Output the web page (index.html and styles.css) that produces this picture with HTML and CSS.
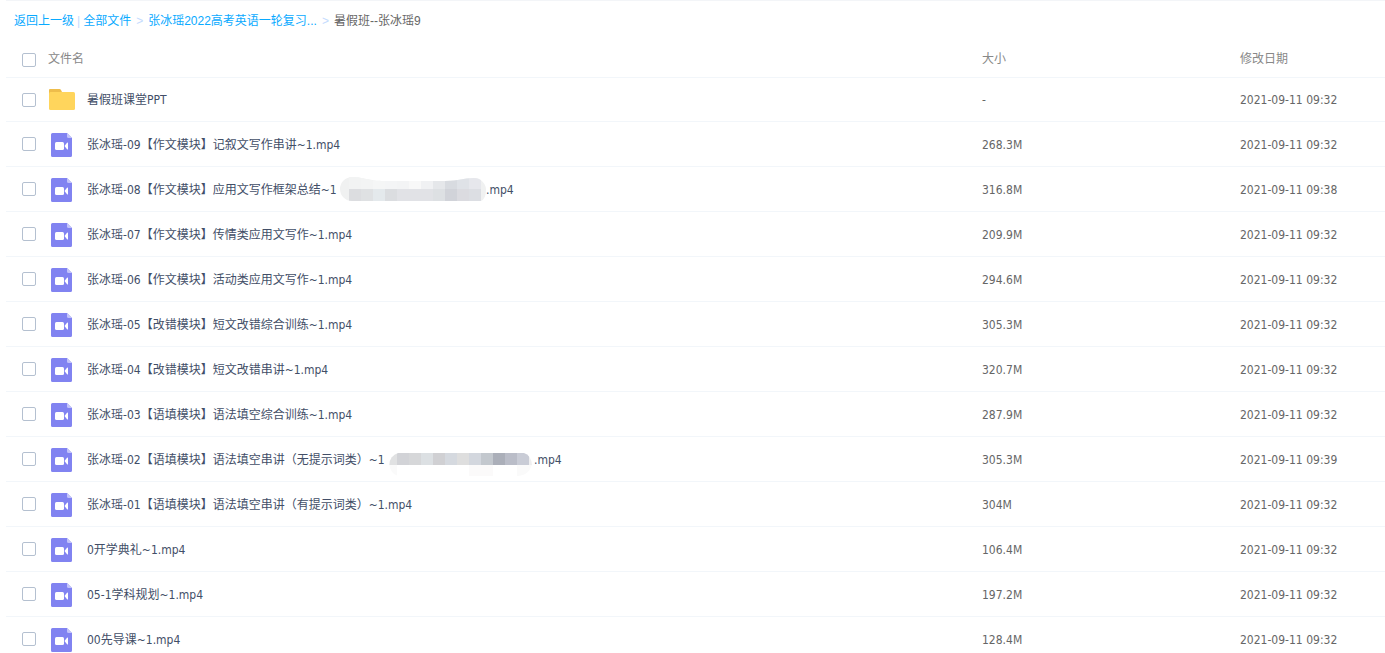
FILE: index.html
```
<!DOCTYPE html>
<html lang="zh-CN">
<head>
    <meta charset="UTF-8">
    <meta name="viewport" content="width=device-width, initial-scale=1.0">
    <title>全部文件</title>
    <link rel="stylesheet" href="styles.css">
</head>
<body>
    <!-- icons shared by the rows -->
    <svg class="sprite" aria-hidden="true">
        <symbol id="icon-folder" viewBox="0 0 26 21">
            <path d="M1 0h9.500q1 0 1.500 1l1 2v4H0V1q0-1 1-1z" fill="#eebd4b"/>
            <rect y="3" width="26" height="18" rx="1.500" fill="#ffd55c"/>
        </symbol>
        <symbol id="icon-video" viewBox="0 0 21 24">
            <path d="M1.500 0H16l5 5v17.500a1.500 1.500 0 0 1-1.500 1.500h-18A1.500 1.500 0 0 1 0 22.500v-21A1.500 1.500 0 0 1 1.500 0z" fill="#8183f1"/>
            <path d="M16 0l5 5h-3.500A1.500 1.500 0 0 1 16 3.500z" fill="#c3c4fa"/>
            <rect x="4" y="9" width="9" height="8" rx="1.500" fill="#fff"/>
            <path d="M13.500 13l2.500-3.200q1-.8 1 .2v6q0 1-1 .2z" fill="#fff"/>
        </symbol>
    </svg>

    <div class="file-list">
        <nav class="breadcrumb">
            <a href="#">返回上一级</a>
            <span class="line">|</span>
            <a href="#">全部文件</a>
            <span class="arrow">&gt;</span>
            <a href="#">张冰瑶2022高考英语一轮复习...</a>
            <span class="arrow">&gt;</span>
            <span class="current">暑假班--张冰瑶9</span>
        </nav>

        <table class="files">
            <colgroup>
                <col class="col-check">
                <col class="col-icon">
                <col>
                <col class="col-size">
                <col class="col-date">
            </colgroup>
            <thead>
                <tr>
                    <th class="check"><input type="checkbox" aria-label="全选"></th>
                    <th colspan="2">文件名</th>
                    <th>大小</th>
                    <th>修改日期</th>
                </tr>
            </thead>
            <tbody>
                <tr>
                    <td class="check"><input type="checkbox" id="f0"></td>
                    <td class="icon"><svg class="folder"><use href="#icon-folder"/></svg></td>
                    <td class="name"><label for="f0">暑假班课堂PPT</label></td>
                    <td>-</td>
                    <td>2021-09-11 09:32</td>
                </tr>
                <tr>
                    <td class="check"><input type="checkbox" id="f1"></td>
                    <td class="icon"><svg class="video"><use href="#icon-video"/></svg></td>
                    <td class="name"><label for="f1">张冰瑶-09【作文模块】记叙文写作串讲~1.mp4</label></td>
                    <td>268.3M</td>
                    <td>2021-09-11 09:32</td>
                </tr>
                <tr>
                    <td class="check"><input type="checkbox" id="f2"></td>
                    <td class="icon"><svg class="video"><use href="#icon-video"/></svg></td>
                    <td class="name">
                        <label for="f2">张冰瑶-08【作文模块】应用文写作框架总结~1
                            <svg class="mosaic" viewBox="0 0 146 24" aria-hidden="true">
                                <clipPath id="clip-a"><path d="M12 0C24 0 28 4 45 4H105C120 4 122 1 134 1A12 12 0 0 1 146 12Q146 22 141 24H12A12 12 0 0 1 12 0z"/></clipPath>
                                <g clip-path="url(#clip-a)" shape-rendering="crispEdges">
                                    <rect width="146" height="24" fill="#f0f1f1"/>
                                    <rect x="9" width="12" height="12" fill="#f2f3f3"/>
                                    <rect x="21" width="12" height="12" fill="#f3f4f4"/>
                                    <rect x="33" width="12" height="12" fill="#f5f6f6"/>
                                    <rect x="45" width="12" height="12" fill="#f4f5f6"/>
                                    <rect x="57" width="12" height="12" fill="#f3f4f5"/>
                                    <rect x="69" width="12" height="12" fill="#f8f8f8"/>
                                    <rect x="81" width="12" height="12" fill="#f0f1f3"/>
                                    <rect x="93" width="12" height="12" fill="#e5e7ea"/>
                                    <rect x="105" width="12" height="12" fill="#d8dbe0"/>
                                    <rect x="117" width="12" height="12" fill="#dfe2e7"/>
                                    <rect x="129" width="12" height="12" fill="#e6e7ec"/>
                                    <rect x="9" y="12" width="12" height="12" fill="#dcdde0"/>
                                    <rect x="21" y="12" width="12" height="12" fill="#dfe1e3"/>
                                    <rect x="33" y="12" width="12" height="12" fill="#e4e9ec"/>
                                    <rect x="45" y="12" width="12" height="12" fill="#dbdde0"/>
                                    <rect x="57" y="12" width="36" height="12" fill="#e1e2e6"/>
                                    <rect x="93" y="12" width="12" height="12" fill="#dde0e3"/>
                                    <rect x="105" y="12" width="12" height="12" fill="#d1d3d9"/>
                                    <rect x="117" y="12" width="12" height="12" fill="#dbdbe0"/>
                                    <rect x="129" y="12" width="12" height="12" fill="#dcdee3"/>
                                </g>
                            </svg>.mp4</label>
                    </td>
                    <td>316.8M</td>
                    <td>2021-09-11 09:38</td>
                </tr>
                <tr>
                    <td class="check"><input type="checkbox" id="f3"></td>
                    <td class="icon"><svg class="video"><use href="#icon-video"/></svg></td>
                    <td class="name"><label for="f3">张冰瑶-07【作文模块】传情类应用文写作~1.mp4</label></td>
                    <td>209.9M</td>
                    <td>2021-09-11 09:32</td>
                </tr>
                <tr>
                    <td class="check"><input type="checkbox" id="f4"></td>
                    <td class="icon"><svg class="video"><use href="#icon-video"/></svg></td>
                    <td class="name"><label for="f4">张冰瑶-06【作文模块】活动类应用文写作~1.mp4</label></td>
                    <td>294.6M</td>
                    <td>2021-09-11 09:32</td>
                </tr>
                <tr>
                    <td class="check"><input type="checkbox" id="f5"></td>
                    <td class="icon"><svg class="video"><use href="#icon-video"/></svg></td>
                    <td class="name"><label for="f5">张冰瑶-05【改错模块】短文改错综合训练~1.mp4</label></td>
                    <td>305.3M</td>
                    <td>2021-09-11 09:32</td>
                </tr>
                <tr>
                    <td class="check"><input type="checkbox" id="f6"></td>
                    <td class="icon"><svg class="video"><use href="#icon-video"/></svg></td>
                    <td class="name"><label for="f6">张冰瑶-04【改错模块】短文改错串讲~1.mp4</label></td>
                    <td>320.7M</td>
                    <td>2021-09-11 09:32</td>
                </tr>
                <tr>
                    <td class="check"><input type="checkbox" id="f7"></td>
                    <td class="icon"><svg class="video"><use href="#icon-video"/></svg></td>
                    <td class="name"><label for="f7">张冰瑶-03【语填模块】语法填空综合训练~1.mp4</label></td>
                    <td>287.9M</td>
                    <td>2021-09-11 09:32</td>
                </tr>
                <tr>
                    <td class="check"><input type="checkbox" id="f8"></td>
                    <td class="icon"><svg class="video"><use href="#icon-video"/></svg></td>
                    <td class="name">
                        <label for="f8">张冰瑶-02【语填模块】语法填空串讲（无提示词类）~1
                            <svg class="mosaic" viewBox="0 0 146 24" aria-hidden="true">
                                <clipPath id="clip-b"><path d="M10 6H136Q143 8 144 18Q140 29 130 29H10A12 12 0 0 1 10 6z"/></clipPath>
                                <g clip-path="url(#clip-b)" shape-rendering="crispEdges">
                                    <rect y="6" width="9" height="12" fill="#e0e1e2"/>
                                    <rect x="9" y="6" width="12" height="12" fill="#d2d3d7"/>
                                    <rect x="21" y="6" width="12" height="12" fill="#d6d7d9"/>
                                    <rect x="33" y="6" width="12" height="12" fill="#dce0e3"/>
                                    <rect x="45" y="6" width="12" height="12" fill="#d0d0d3"/>
                                    <rect x="57" y="6" width="12" height="12" fill="#d5d9df"/>
                                    <rect x="69" y="6" width="12" height="12" fill="#dedede"/>
                                    <rect x="81" y="6" width="12" height="12" fill="#d3d7de"/>
                                    <rect x="93" y="6" width="12" height="12" fill="#c3c8ce"/>
                                    <rect x="105" y="6" width="12" height="12" fill="#abafb9"/>
                                    <rect x="117" y="6" width="12" height="12" fill="#babdc8"/>
                                    <rect x="129" y="6" width="12" height="12" fill="#c9ccd6"/>
                                    <rect x="141" y="6" width="4" height="12" fill="#efeff0"/>
                                    <rect y="18" width="9" height="12" fill="#fafafa"/>
                                    <rect x="81" y="18" width="24" height="12" fill="#fbfafa"/>
                                    <rect x="129" y="18" width="15" height="12" fill="#fafafa"/>
                                </g>
                            </svg>.mp4</label>
                    </td>
                    <td>305.3M</td>
                    <td>2021-09-11 09:39</td>
                </tr>
                <tr>
                    <td class="check"><input type="checkbox" id="f9"></td>
                    <td class="icon"><svg class="video"><use href="#icon-video"/></svg></td>
                    <td class="name"><label for="f9">张冰瑶-01【语填模块】语法填空串讲（有提示词类）~1.mp4</label></td>
                    <td>304M</td>
                    <td>2021-09-11 09:32</td>
                </tr>
                <tr>
                    <td class="check"><input type="checkbox" id="f10"></td>
                    <td class="icon"><svg class="video"><use href="#icon-video"/></svg></td>
                    <td class="name"><label for="f10">0开学典礼~1.mp4</label></td>
                    <td>106.4M</td>
                    <td>2021-09-11 09:32</td>
                </tr>
                <tr>
                    <td class="check"><input type="checkbox" id="f11"></td>
                    <td class="icon"><svg class="video"><use href="#icon-video"/></svg></td>
                    <td class="name"><label for="f11">05-1学科规划~1.mp4</label></td>
                    <td>197.2M</td>
                    <td>2021-09-11 09:32</td>
                </tr>
                <tr>
                    <td class="check"><input type="checkbox" id="f12"></td>
                    <td class="icon"><svg class="video"><use href="#icon-video"/></svg></td>
                    <td class="name"><label for="f12">00先导课~1.mp4</label></td>
                    <td>128.4M</td>
                    <td>2021-09-11 09:32</td>
                </tr>
            </tbody>
        </table>
    </div>
</body>
</html>
```

FILE: styles.css
```
body {
    margin: 0;
    height: 100vh;
    overflow: hidden;
    background-color: #fff;
    color: #666;
    font-family: "DejaVu Sans Condensed", "Noto Sans", "Noto Sans CJK SC", sans-serif;
    font-size: 12px;
    line-height: 18px;
}
.sprite {
    display: none;
}
.file-list {
    margin-left: 6px;
    border-top: 1px solid #f3f5f8;
}

/* breadcrumb */
.breadcrumb {
    display: flex;
    align-items: center;
    gap: 5px;
    height: 40px;
    padding-left: 8px;
    font-family: "Liberation Sans", "Noto Sans CJK SC", sans-serif;
}
.breadcrumb a {
    color: #09aaff;
    text-decoration: none;
}
.breadcrumb a:hover {
    text-decoration: underline;
}
.line, .arrow {
    color: #c4dbfe;
}
.line {
    margin: 0 -2px;
}
.current {
    color: #666;
}

/* file table */
.files {
    width: 100%;
    border-collapse: separate;
    border-spacing: 0;
    table-layout: fixed;
}
.col-check {
    width: 42px;
}
.col-icon {
    width: 39px;
}
.col-size {
    width: 258px;
}
.col-date {
    width: 145px;
}
.files th, .files td {
    box-sizing: border-box;
    height: 45px;
    padding: 2px 0 0;
    border-bottom: 1px solid #f2f6fa;
    text-align: left;
    vertical-align: middle;
}
.files th {
    height: 37px;
    padding-top: 0;
    color: #888;
    font-weight: normal;
}
.files tbody tr:first-child td {
    height: 44px;
    padding-top: 0;
}
.files .check {
    padding: 0 0 0 16px;
}
.files th.check {
    padding-top: 2px;
}
.files .name {
    color: #424e67;
    white-space: nowrap;
}
.files input {
    display: block;
    appearance: none;
    box-sizing: border-box;
    width: 14px;
    height: 14px;
    margin: 0;
    border: 1px solid #b4c0d0;
    border-radius: 2px;
    background-color: #fff;
}
.files input:checked {
    background-color: #09aaff;
}
.folder, .video {
    display: block;
}
.folder {
    width: 26px;
    height: 21px;
    margin-left: 1px;
}
.video {
    width: 21px;
    height: 24px;
    margin-left: 3px;
}
.mosaic {
    width: 146px;
    height: 24px;
    margin-bottom: 2px;
    vertical-align: middle;
    overflow: visible;
}
```
